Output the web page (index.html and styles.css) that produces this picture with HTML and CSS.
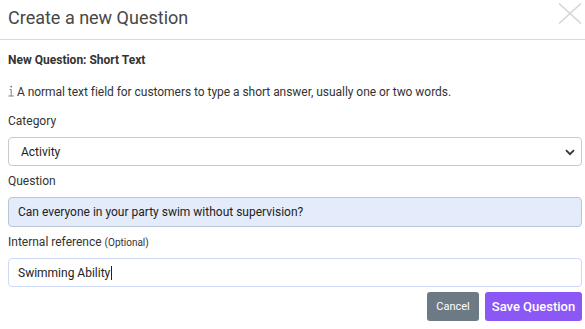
FILE: index.html
```html
<!DOCTYPE html>
<html lang="en">
<head>
<meta charset="utf-8">
<title>Create a new Question</title>
<link rel="stylesheet" href="styles.css">
</head>
<body>
<div class="modal">
  <div class="modal-header">
    <h1 class="modal-title">Create a new Question</h1>
    <button class="close" aria-label="Close">
      <svg width="24" height="21" viewBox="0 0 24 21"><path d="M1 0.5 L23 20.5 M23 0.5 L1 20.5" stroke="#d6d6d6" stroke-width="1.6" fill="none"/></svg>
    </button>
  </div>
  <div class="modal-body">
    <div class="subtitle">New Question: Short Text</div>
    <div class="info"><svg class="info-icon" width="6" height="12" viewBox="0 0 6 12"><circle cx="3.2" cy="1.6" r="0.9" fill="#6f6f6f"/><path d="M1.6 4.5 H3.2 V10.8 M0.4 11 H5.8" stroke="#6f6f6f" stroke-width="0.9" fill="none"/></svg> A normal text field for customers to type a short answer, usually one or two words.</div>
    <div class="group">
      <label class="label">Category</label>
      <div class="select-wrap">
        <select class="field select"><option>Activity</option></select>
        <svg class="chevron" width="10" height="7" viewBox="0 0 10 7"><path d="M1 1.2 L5 5.2 L9 1.2" stroke="#333" stroke-width="1.8" fill="none"/></svg>
      </div>
    </div>
    <div class="group">
      <label class="label">Question</label>
      <div class="field question">Can everyone in your party swim without supervision?</div>
    </div>
    <div class="group group-ref">
      <label class="label">Internal reference <span class="optional">(Optional)</span></label>
      <div class="field ref">Swimming Ability<span class="caret"></span></div>
    </div>
    <div class="actions">
      <button class="btn btn-cancel">Cancel</button>
      <button class="btn btn-save">Save Question</button>
    </div>
  </div>
</div>
</body>
</html>
```
FILE: styles.css
```css
* { box-sizing: border-box; }
body {
  margin: 0;
  background: #fff;
  font-family: Roboto, "Liberation Sans", Arial, sans-serif;
  font-size: 12px;
  color: #333;
}
.modal { width: 585px; }
.modal-header {
  height: 40px;
  border-bottom: 1px solid #d3dce3;
  display: flex;
  align-items: center;
  justify-content: space-between;
  padding: 0 3px 0 8px;
}
.modal-title {
  margin: 0;
  font-size: 18px;
  font-weight: 400;
  color: #474747;
  position: relative;
  top: -2px;
}
.close {
  border: 0;
  background: none;
  padding: 0;
  width: 24px;
  height: 21px;
  align-self: flex-start;
  margin-top: 3px;
}
.close svg { display: block; }
.modal-body { padding: 12px 3px 0 8px; }
.subtitle {
  font-weight: 700;
  line-height: 16px;
  color: #333;
}
.info {
  margin-top: 16px;
  line-height: 16px;
  color: #333;
  letter-spacing: -0.04px;
}
.info-icon {
  vertical-align: -1px;
}
.group { margin-top: 13px; }
.group + .group { margin-top: 7px; }
.label {
  display: block;
  line-height: 16px;
  color: #333;
  margin-bottom: 8px;
}
.group-ref { margin-top: 6px; }
.group-ref .label { margin-bottom: 7px; }
.optional { font-size: 10px; }
.field {
  width: 100%;
  height: 30px;
  border-radius: 4px;
  border: 1px solid #c6cbd0;
  font-family: inherit;
  font-size: 12px;
  color: #222;
  padding: 0 9px;
  display: flex;
  align-items: center;
  background: #fff;
}
.select-wrap { position: relative; }
.select {
  appearance: none;
  -webkit-appearance: none;
  outline: none;
  padding-left: 12px;
  height: 29px;
}
.chevron {
  position: absolute;
  right: 7px;
  top: 12px;
}
.question {
  background: #e4ecfb;
  border-color: #b9c7d4;
}
.ref {
  border-color: #cdd9f6;
  height: 29px;
}
.caret {
  display: inline-block;
  width: 1px;
  height: 14px;
  background: #222;
  margin-left: 1px;
}
.actions {
  display: flex;
  justify-content: flex-end;
  gap: 6px;
  margin-top: 5px;
}
.btn {
  border: 0;
  border-radius: 3px;
  color: #fff;
  font-family: inherit;
  height: 29px;
  cursor: pointer;
}
.btn-cancel {
  background: #6c7a85;
  font-size: 11px;
  width: 52px;
}
.btn-save {
  background: #8b58f6;
  font-size: 13px;
  font-weight: 500;
  width: 97px;
}
```
